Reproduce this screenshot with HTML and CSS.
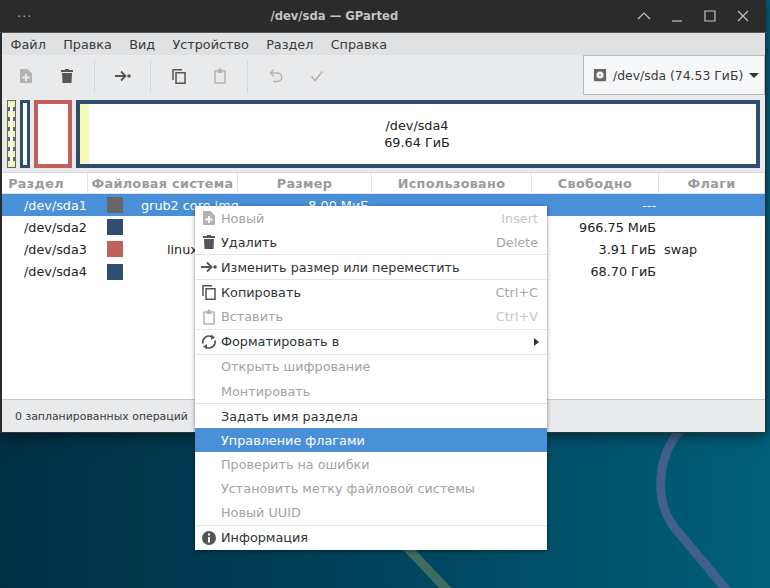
FILE: index.html
```html
<!DOCTYPE html>
<html lang="en">
<head>
<meta charset="UTF-8">
<meta name="viewport" content="width=device-width, initial-scale=1.0">
<title>/dev/sda — GParted</title>
<link rel="stylesheet" href="styles.css">
</head>
<body>

<!-- Icon set -->
<svg class="icon-defs" aria-hidden="true">
    <symbol id="i-new" viewBox="0 0 16 16"><path fill-rule="evenodd" fill="currentColor" d="M3 1h6.500L14 5.500V14a1 1 0 0 1-1 1H3a1 1 0 0 1-1-1V2a1 1 0 0 1 1-1zM7 6v2.500H4.500v2H7V13h2v-2.500h2.500v-2H9V6z"/></symbol>
    <symbol id="i-trash" viewBox="0 0 16 16"><path fill="currentColor" d="M6 1h4v1h4v2H2V2h4zM3 5h10l-.5 10h-9z"/></symbol>
    <symbol id="i-move" viewBox="0 0 16 16"><path fill="none" stroke="currentColor" stroke-width="1.800" d="M0 8h10M6 3.500L10.500 8 6 12.500"/><circle cx="14" cy="8" r="1.800" fill="currentColor"/></symbol>
    <symbol id="i-copy" viewBox="0 0 16 16"><path fill="none" stroke="currentColor" stroke-width="1.500" d="M2 12V1.800h9M5 4.800h9v10.400H5z"/></symbol>
    <symbol id="i-paste" viewBox="0 0 16 16"><path fill="none" stroke="currentColor" stroke-width="1.500" d="M5.500 3H3v12h10V3h-2.500"/><path fill="currentColor" d="M5.500 1.500h1.500V.500h2v1h1.500V5h-5z"/></symbol>
    <symbol id="i-undo" viewBox="0 0 16 16"><path fill="none" stroke="currentColor" stroke-width="1.400" d="M6 1.500L2.500 5 6 8.500M3 5h6.500a4.200 4.200 0 0 1 0 8.500H5"/></symbol>
    <symbol id="i-check" viewBox="0 0 16 16"><path fill="none" stroke="currentColor" stroke-width="1.600" d="M2.500 8.500l3.500 4L13.500 3.500"/></symbol>
    <symbol id="i-format" viewBox="0 0 16 16"><path fill="none" stroke="currentColor" stroke-width="1.700" d="M2 9.500A6 6 0 0 1 11 3M14 6.500A6 6 0 0 1 5 13"/><path fill="currentColor" d="M10 .500L14 3.500 10 6zM6 10l-4 2.500 4 3z"/></symbol>
    <symbol id="i-info" viewBox="0 0 16 16"><path fill-rule="evenodd" fill="currentColor" d="M8 1a7 7 0 1 1 0 14A7 7 0 0 1 8 1zM7 3.500v2h2v-2zM7 7v5.500h2V7z"/></symbol>
    <symbol id="i-drive" viewBox="0 0 16 16"><path fill-rule="evenodd" fill="currentColor" d="M2 1h12a1 1 0 0 1 1 1v12a1 1 0 0 1-1 1H2a1 1 0 0 1-1-1V2a1 1 0 0 1 1-1zM8 4a4 4 0 1 0 0 8 4 4 0 0 0 0-8zM8 7a1 1 0 1 1 0 2 1 1 0 0 1 0-2z"/></symbol>
</svg>

<!-- Wallpaper lines -->
<svg class="wallpaper" viewBox="0 0 770 588">
    <path class="line-blue" d="M682 428C656 456 652 506 680 534L735 600"/>
    <path class="line-green" d="M400 540L450 593"/>
</svg>

<div class="window">
    <div class="titlebar">
        <span class="title-dots">···</span>
        <span class="title-text">/dev/sda — GParted</span>
        <div class="title-buttons">
            <svg viewBox="0 0 14 14"><path d="M1 10l6-6 6 6"/></svg>
            <svg viewBox="0 0 14 14"><path d="M2 12h10"/></svg>
            <svg viewBox="0 0 14 14"><path d="M2 2h10v10H2z"/></svg>
            <svg viewBox="0 0 14 14"><path d="M2 2l10 10M12 2L2 12"/></svg>
        </div>
    </div>

    <div class="menubar">
        <span>Файл</span>
        <span>Правка</span>
        <span>Вид</span>
        <span>Устройство</span>
        <span>Раздел</span>
        <span>Справка</span>
    </div>

    <div class="toolbar">
        <div class="tool off"><svg><use href="#i-new"/></svg></div>
        <div class="tool"><svg><use href="#i-trash"/></svg></div>
        <div class="tool-sep"></div>
        <div class="tool"><svg><use href="#i-move"/></svg></div>
        <div class="tool-sep"></div>
        <div class="tool"><svg><use href="#i-copy"/></svg></div>
        <div class="tool off"><svg><use href="#i-paste"/></svg></div>
        <div class="tool-sep"></div>
        <div class="tool off"><svg><use href="#i-undo"/></svg></div>
        <div class="tool off"><svg><use href="#i-check"/></svg></div>
        <div class="device-combo">
            <svg><use href="#i-drive"/></svg>
            <span>/dev/sda (74.53 ГиБ)</span>
            <i class="combo-arrow"></i>
        </div>
    </div>

    <div class="partmap">
        <div class="part part-sda1"><div class="part-used"></div></div>
        <div class="part part-sda2"></div>
        <div class="part part-sda3"></div>
        <div class="part part-sda4">
            <div class="part-used"></div>
            <div class="part-label">/dev/sda4<br>69.64 ГиБ</div>
        </div>
    </div>

    <div class="parts-list">
        <div class="list-head">
            <span class="head-name">Раздел</span>
            <span>Файловая система</span>
            <span>Размер</span>
            <span>Использовано</span>
            <span>Свободно</span>
            <span>Флаги</span>
        </div>
        <div class="list-row selected">
            <span class="c-name">/dev/sda1</span>
            <span class="c-fs"><i class="swatch grey"></i><em class="fs-grub">grub2 core.img</em></span>
            <span class="c-num">8.00 МиБ</span>
            <span class="c-num">---</span>
            <span class="c-num">---</span>
            <span></span>
        </div>
        <div class="list-row">
            <span class="c-name">/dev/sda2</span>
            <span class="c-fs"><i class="swatch blue"></i></span>
            <span class="c-num"></span>
            <span class="c-num"></span>
            <span class="c-num">966.75 МиБ</span>
            <span></span>
        </div>
        <div class="list-row">
            <span class="c-name">/dev/sda3</span>
            <span class="c-fs"><i class="swatch red"></i><em class="fs-swap">linux-swap</em></span>
            <span class="c-num"></span>
            <span class="c-num"></span>
            <span class="c-num">3.91 ГиБ</span>
            <span class="c-flags">swap</span>
        </div>
        <div class="list-row">
            <span class="c-name">/dev/sda4</span>
            <span class="c-fs"><i class="swatch blue"></i></span>
            <span class="c-num"></span>
            <span class="c-num"></span>
            <span class="c-num">68.70 ГиБ</span>
            <span></span>
        </div>
    </div>

    <div class="statusbar">0 запланированных операций</div>
</div>

<!-- Context menu -->
<div class="context-menu">
    <div class="item off"><svg><use href="#i-new"/></svg><span>Новый</span><kbd>Insert</kbd></div>
    <div class="item"><svg><use href="#i-trash"/></svg><span>Удалить</span><kbd>Delete</kbd></div>
    <div class="sep"></div>
    <div class="item"><svg><use href="#i-move"/></svg><span>Изменить размер или переместить</span></div>
    <div class="sep"></div>
    <div class="item"><svg><use href="#i-copy"/></svg><span>Копировать</span><kbd>Ctrl+C</kbd></div>
    <div class="item off"><svg><use href="#i-paste"/></svg><span>Вставить</span><kbd>Ctrl+V</kbd></div>
    <div class="sep"></div>
    <div class="item"><svg><use href="#i-format"/></svg><span>Форматировать в</span><i class="sub-arrow"></i></div>
    <div class="sep"></div>
    <div class="item off no-icon"><span>Открыть шифрование</span></div>
    <div class="item off no-icon"><span>Монтировать</span></div>
    <div class="sep"></div>
    <div class="item no-icon"><span>Задать имя раздела</span></div>
    <div class="item no-icon active"><span>Управление флагами</span></div>
    <div class="item off no-icon"><span>Проверить на ошибки</span></div>
    <div class="item off no-icon"><span>Установить метку файловой системы</span></div>
    <div class="item off no-icon"><span>Новый UUID</span></div>
    <div class="sep"></div>
    <div class="item"><svg><use href="#i-info"/></svg><span>Информация</span></div>
</div>

</body>
</html>
```
FILE: styles.css
```css
html, body {
    margin: 0;
    padding: 0;
    height: 100%;
    overflow: hidden;
}
body {
    position: relative;
    font-family: "DejaVu Sans", sans-serif;
    font-size: 12.800px;
    color: #2e3436;
    background: linear-gradient(90deg, #002f44 0%, #00445c 50%, #005f7b 100%);
}
.icon-defs {
    position: absolute;
    width: 0;
    height: 0;
}
.wallpaper {
    position: absolute;
    left: 0;
    top: 0;
    width: 770px;
    height: 588px;
    fill: none;
}
.line-blue {
    stroke: #41608c;
    stroke-width: 9;
}
.line-green {
    stroke: #3f6b60;
    stroke-width: 9;
}

/* Window */
.window {
    position: absolute;
    left: 0;
    top: 0;
    width: 766px;
    height: 433px;
    display: flex;
    flex-direction: column;
    box-sizing: border-box;
    background-color: #e9eaec;
    border-left: 2px solid #2b2b2b;
    border-right: 1px solid #2b2b2b;
    border-bottom: 1px solid #333;
    box-shadow: 0 3px 14px rgba(0, 0, 0, 0.5);
}
.titlebar {
    height: 32px;
    margin-left: -2px;
    margin-right: -1px;
    display: flex;
    align-items: center;
    flex-shrink: 0;
    background-color: #2b2b2b;
    color: #c4c4c4;
    border-bottom: 1px solid #555;
}
.title-dots {
    margin-left: 17px;
    font-size: 13px;
    letter-spacing: 1px;
    color: #aaa;
}
.title-text {
    margin-left: 238px;
    font-weight: bold;
    font-size: 11.600px;
}
.title-buttons {
    margin-left: auto;
    margin-right: 16px;
    display: flex;
    gap: 19px;
}
.title-buttons svg {
    width: 14px;
    height: 14px;
    fill: none;
    stroke: #c4c4c4;
    stroke-width: 1.200;
}
.menubar {
    height: 22px;
    flex-shrink: 0;
    padding-left: 8.500px;
    display: flex;
    align-items: center;
    gap: 17.300px;
    background-color: #e0e1e3;
    color: #3a3a3a;
}
.toolbar {
    height: 42px;
    flex-shrink: 0;
    padding-left: 3px;
    display: flex;
    align-items: center;
    color: #555;
}
.tool {
    width: 41px;
    height: 34px;
    display: flex;
    align-items: center;
    justify-content: center;
}
.tool svg {
    width: 16px;
    height: 16px;
}
.tool.off {
    color: #b3b3b3;
}
.tool-sep {
    width: 1px;
    height: 33px;
    margin: 0 7px;
    background-color: #d7d8da;
}
.device-combo {
    width: 182px;
    height: 40px;
    margin-left: auto;
    margin-bottom: 2px;
    box-sizing: border-box;
    display: flex;
    align-items: center;
    padding-left: 9px;
    gap: 6px;
    white-space: nowrap;
    font-size: 12.400px;
    background-color: #f6f7f8;
    border: 1px solid #b8b9bb;
    color: #3a3a3a;
}
.device-combo svg {
    width: 14px;
    height: 14px;
    color: #666;
}
.combo-arrow {
    border-left: 5px solid transparent;
    border-right: 5px solid transparent;
    border-top: 5px solid #333;
}

/* Partition map */
.partmap {
    height: 75px;
    flex-shrink: 0;
    box-sizing: border-box;
    padding: 3px 5px 4px 5px;
    display: flex;
    gap: 4px;
}
.part {
    box-sizing: border-box;
    height: 68px;
    display: flex;
    background-color: #fff;
    border: 4px solid #2f4d6f;
}
.part-sda1 {
    width: 9px;
    border: 1px solid #666;
    background-color: #666;
}
.part-sda2 {
    width: 10px;
    border-width: 3px;
}
.part-sda3 {
    width: 38px;
    border-color: #c0625a;
}
.part-sda4 {
    flex: 1;
    position: relative;
}
.part-sda1 .part-used {
    flex: 1;
    border: 2px dashed #f4f49a;
    background-color: #fff;
    background-clip: padding-box;
}
.part-sda4 .part-used {
    width: 9px;
    background-color: #f8f8b8;
}
.part-label {
    flex: 1;
    padding-right: 11px;
    display: flex;
    align-items: center;
    justify-content: center;
    text-align: center;
    line-height: 17px;
    color: #222;
}

/* Partition list */
.parts-list {
    flex: 1;
    background-color: #fff;
    color: #222;
}
.list-head, .list-row {
    display: grid;
    grid-template-columns: 86px 150px 134px 160px 127px 1fr;
}
.list-head {
    height: 22px;
    box-sizing: border-box;
    border-top: 1px solid #d5d6d8;
    border-bottom: 1px solid #e4e4e4;
    font-weight: bold;
    letter-spacing: 0.300px;
    color: #9a9a9a;
}
.list-head span {
    display: flex;
    align-items: center;
    justify-content: center;
    border-right: 1px solid #e4e4e4;
}
.list-head .head-name {
    padding-right: 17px;
}
.list-row {
    height: 22.200px;
    align-items: center;
}
.list-row.selected {
    background-color: #4a90d9;
    color: #fff;
}
.c-name {
    padding-left: 22px;
}
.c-fs {
    display: flex;
    align-items: center;
    white-space: nowrap;
}
.c-fs em {
    font-style: normal;
}
.swatch {
    width: 16px;
    height: 16px;
    margin-left: 19px;
    flex-shrink: 0;
}
.swatch.grey { background-color: #666; }
.swatch.blue { background-color: #2f4d6f; }
.swatch.red { background-color: #c0625a; }
.fs-grub {
    margin-left: 18px;
}
.fs-swap {
    margin-left: 44px;
}
.c-num {
    text-align: right;
    padding-right: 3px;
}
.c-flags {
    padding-left: 5px;
}
.statusbar {
    height: 33px;
    flex-shrink: 0;
    box-sizing: border-box;
    padding-left: 13px;
    display: flex;
    align-items: center;
    border-top: 1px solid #c9cacc;
    font-size: 10.900px;
    color: #3a3a3a;
}

/* Context menu */
.context-menu {
    position: absolute;
    left: 195px;
    top: 206px;
    width: 352px;
    background-color: #fff;
    box-shadow: 0 1px 4px rgba(0, 0, 0, 0.45);
}
.item {
    height: 24.150px;
    padding: 0 9px 0 6px;
    display: flex;
    align-items: center;
    color: #2e3436;
}
.item svg {
    width: 16px;
    height: 16px;
    margin-right: 4px;
    color: #555;
    flex-shrink: 0;
}
.item.no-icon {
    padding-left: 26px;
}
.item kbd {
    margin-left: auto;
    font-family: inherit;
    color: #a8a8a8;
}
.item.off {
    color: #a3a3a3;
}
.item.off svg {
    color: #b3b3b3;
}
.item.off kbd {
    color: #c8c8c8;
}
.item.active {
    background-color: #4a90d9;
    color: #fff;
}
.sep {
    height: 1px;
    background-color: #e6e6e6;
}
.sub-arrow {
    margin-left: auto;
    margin-right: -1px;
    border-top: 4px solid transparent;
    border-bottom: 4px solid transparent;
    border-left: 5px solid #333;
}
```
